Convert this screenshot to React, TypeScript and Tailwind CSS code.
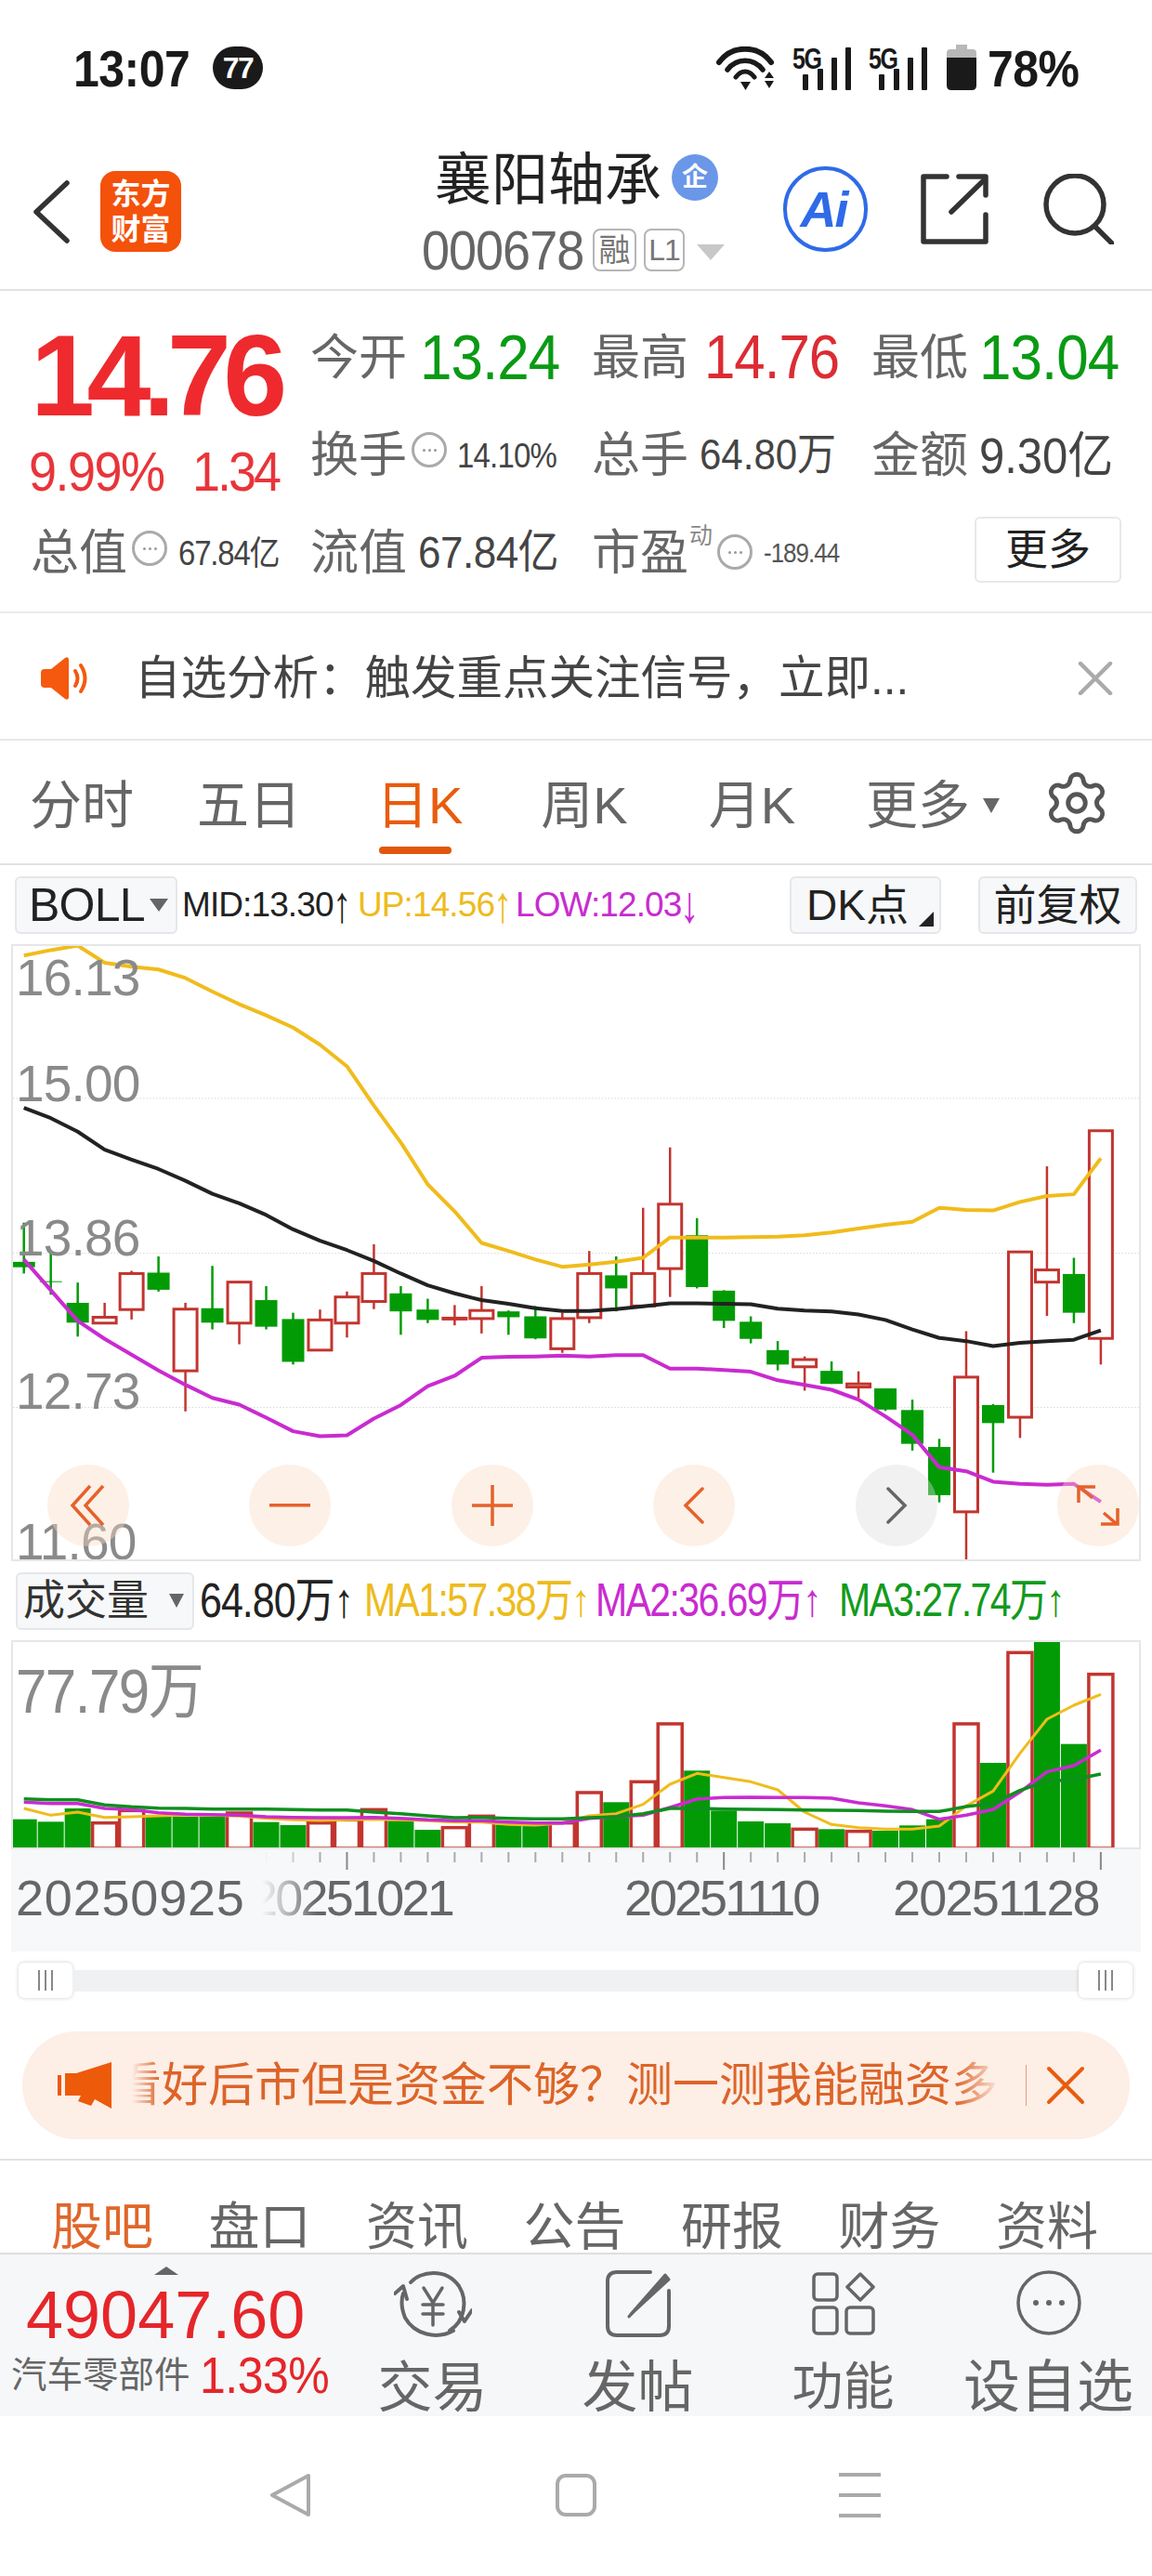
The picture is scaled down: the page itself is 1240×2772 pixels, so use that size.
import React from 'react';
import { Settings } from 'lucide-react';

const zy = (z: number) => 940 + z / 2.063;
const vy = (z: number) => 1690 + z / 3;
const cx = (i: number) => 25.7 + 28.98 * i;
const RED = '#c2352f';
const GREEN = '#029b06';

type Candle = [0 | 1, number, number, number, number];

// up, wick top, body top, body bottom, wick bottom (zoomed crop coords)
const candles: Candle[] = [
  [0, 775, 862, 874, 888], [0, 840, 905, 907, 935], [0, 908, 953, 997, 1028], [1, 953, 985, 998, 998],
  [1, 882, 888, 968, 990], [0, 850, 886, 924, 928], [1, 953, 967, 1104, 1194], [0, 871, 965, 997, 1012],
  [1, 905, 907, 998, 1045], [0, 916, 947, 1006, 1012], [0, 975, 989, 1084, 1090], [1, 968, 991, 1058, 1058],
  [1, 928, 940, 998, 1030], [1, 823, 888, 950, 967], [0, 916, 932, 972, 1024], [0, 944, 968, 991, 998],
  [1, 958, 987, 989, 1003], [1, 916, 970, 988, 1021], [0, 970, 972, 985, 1024], [0, 960, 983, 1032, 1034],
  [1, 975, 988, 1055, 1064], [1, 838, 888, 986, 998], [0, 850, 892, 921, 972], [1, 742, 888, 960, 962],
  [1, 608, 734, 877, 940], [0, 765, 803, 918, 921], [0, 925, 926, 993, 1009], [0, 983, 995, 1033, 1043],
  [0, 1038, 1058, 1090, 1103], [1, 1072, 1079, 1095, 1148], [0, 1083, 1104, 1133, 1133], [1, 1105, 1133, 1140, 1165],
  [0, 1143, 1143, 1190, 1193], [0, 1168, 1191, 1266, 1281], [0, 1255, 1273, 1380, 1396], [1, 1016, 1118, 1417, 1525],
  [0, 1178, 1180, 1220, 1330], [1, 840, 840, 1207, 1253], [1, 650, 880, 907, 982], [0, 853, 889, 975, 998],
  [1, 570, 571, 1032, 1090],
];

const upLine = [182, 170, 160, 198, 207, 213, 232, 262, 290, 315, 342, 380, 428, 515, 597, 690, 750, 820, 838, 857, 873, 868, 862, 853, 808, 808, 808, 807, 806, 803, 797, 788, 780, 773, 742, 747, 748, 729, 716, 712, 632];
const midLine = [520, 543, 573, 613, 635, 656, 682, 711, 732, 758, 790, 815, 836, 860, 888, 914, 932, 947, 955, 965, 971, 971, 967, 961, 954, 954, 955, 956, 966, 970, 972, 979, 991, 1012, 1031, 1038, 1049, 1042, 1038, 1035, 1014];
const lowLine = [857, 925, 993, 1033, 1068, 1103, 1135, 1164, 1179, 1208, 1238, 1249, 1247, 1210, 1180, 1138, 1115, 1075, 1073, 1072, 1070, 1072, 1069, 1069, 1099, 1099, 1102, 1106, 1125, 1135, 1146, 1168, 1205, 1246, 1318, 1327, 1350, 1355, 1357, 1355, 1395];

const volumes: [0 | 1, number][] = [
  [0, 803], [0, 811], [0, 768], [1, 815], [1, 775], [0, 795], [0, 795], [0, 795], [1, 783], [0, 812], [0, 822],
  [1, 815], [1, 805], [1, 772], [0, 808], [0, 837], [1, 830], [1, 793], [0, 820], [0, 820], [1, 815], [1, 717],
  [0, 748], [1, 682], [1, 495], [0, 646], [0, 775], [0, 810], [0, 816], [1, 835], [0, 835], [1, 842], [0, 840],
  [0, 823], [0, 803], [1, 495], [0, 621], [1, 265], [0, 224], [0, 560], [1, 335],
];
const ma1 = [768, 790, 780, 797, 795, 792, 790, 790, 793, 800, 805, 807, 805, 803, 805, 808, 812, 812, 820, 822, 815, 792, 785, 755, 690, 655, 668, 682, 708, 780, 820, 830, 835, 835, 825, 760, 712, 590, 480, 435, 400];
const ma2 = [748, 752, 752, 768, 772, 782, 787, 788, 790, 795, 797, 798, 798, 797, 800, 805, 808, 808, 812, 815, 815, 800, 795, 790, 765, 738, 733, 732, 733, 733, 735, 750, 760, 772, 803, 790, 772, 715, 650, 630, 580];
const ma3 = [737, 740, 740, 757, 763, 767, 768, 770, 770, 770, 772, 773, 773, 780, 785, 792, 798, 797, 800, 802, 802, 798, 795, 785, 768, 768, 770, 771, 772, 773, 774, 775, 777, 778, 778, 762, 752, 710, 680, 675, 657];

const pts = (arr: number[], f: (z: number) => number) => arr.map((z, i) => `${cx(i)},${f(z)}`).join(' ');

function DotCircle({ className }: { className?: string }) {
  return (
    <span className={`flex items-center justify-center gap-[3px] rounded-full border-[3px] border-[#aaaaaa] w-[38px] h-[38px] shrink-0 ${className ?? ''}`}>
      <i className="w-[3px] h-[3px] rounded-full bg-[#999999]" />
      <i className="w-[3px] h-[3px] rounded-full bg-[#999999]" />
      <i className="w-[3px] h-[3px] rounded-full bg-[#999999]" />
    </span>
  );
}

function Signal() {
  return (
    <div className="relative w-[62px] h-[47px]">
      <span className="absolute -left-[1px] -top-[2px] text-[25px] leading-none font-bold tracking-[-1.5px] text-[#1a1a1a] scale-y-125 origin-top">5G</span>
      <svg width="62" height="47" viewBox="0 0 62 47" className="block">
        <rect x="10" y="30" width="6" height="17" rx="1" fill="#1a1a1a" />
        <rect x="26" y="24" width="6" height="23" rx="1" fill="#1a1a1a" />
        <rect x="41" y="12" width="6" height="35" rx="1" fill="#1a1a1a" />
        <rect x="56" y="1" width="6" height="46" rx="1" fill="#1a1a1a" />
      </svg>
    </div>
  );
}

function StatusBar() {
  return (
    <div className="h-[144px] pt-[50px] flex items-start shrink-0">
      <span className="ml-[79px] mt-[2px] text-[50px] leading-[44px] font-bold text-[#1a1a1a] tracking-[-0.5px] w-[150px] scale-y-110">13:07</span>
      <span className="flex items-center justify-center w-[54px] h-[46px] rounded-full bg-[#1a1a1a] text-white text-[32px] font-bold tracking-[-1.5px]">77</span>
      <svg width="68" height="47" viewBox="0 0 68 47" className="ml-[488px] block" fill="none" stroke="#1a1a1a" strokeLinecap="round">
        <path d="M3 17 C17 -2 45 -2 59 17" strokeWidth="6" />
        <path d="M12 25 C22 12 40 12 50 25" strokeWidth="5.5" />
        <path d="M21 33 C27 25 35 25 41 33" strokeWidth="5" />
        <path d="M26 38 H37 L31.5 47 Z" fill="#1a1a1a" stroke="none" />
        <path d="M57 27 L62 34 H52 Z M52 37 H62 L57 45 Z" fill="#1a1a1a" stroke="none" />
      </svg>
      <div className="ml-[15px]"><Signal /></div>
      <div className="ml-[20px]"><Signal /></div>
      <svg width="32" height="49" viewBox="0 0 32 49" className="ml-[21px] -mt-[2px] block">
        <path d="M10 0 H22 V5 H28 Q32 5 32 9 V14 H0 V9 Q0 5 4 5 H10 Z" fill="#b8b8b8" />
        <path d="M0 14 H32 V44 Q32 49 27 49 H5 Q0 49 0 44 Z" fill="#1a1a1a" />
      </svg>
      <span className="ml-[12px] mt-[2px] text-[50px] leading-[44px] font-bold text-[#1a1a1a] tracking-[-0.5px] scale-y-110">78%</span>
    </div>
  );
}

function NavHeader() {
  return (
    <div className="h-[169px] shrink-0 flex items-center border-b-2 border-[#e2e2e2]">
      <svg width="39" height="68" viewBox="0 0 39 68" className="ml-[36px] block" fill="none" stroke="#333333" strokeWidth="5.5" strokeLinecap="round" strokeLinejoin="round">
        <path d="M36 3 L3 34 L36 65" />
      </svg>
      <div className="ml-[33px] w-[87px] h-[87px] rounded-[16px] bg-[#f4510b] text-white text-[32px] leading-[38px] font-bold flex flex-col items-center justify-center">
        <span>东方</span>
        <span>财富</span>
      </div>
      <div className="ml-[262px] w-[326px] flex flex-col items-start">
        <div className="flex items-center ml-[11px]">
          <span className="text-[61px] leading-[60px] text-[#222222]">襄阳轴承</span>
          <span className="ml-[11px] -mt-[6px] w-[50px] h-[50px] rounded-full bg-[#6b97e8] text-white text-[28px] font-bold flex items-center justify-center">企</span>
        </div>
        <div className="flex items-center mt-[22px]">
          <span className="text-[54px] leading-[44px] text-[#666666] w-[184px] tracking-[-1px] scale-y-110 origin-left -ml-[3px]">000678</span>
          <span className="w-[47px] h-[46px] border-2 border-[#b5b5b5] rounded-[8px] text-[#777777] text-[34px] leading-none flex items-center justify-center">融</span>
          <span className="ml-[8px] w-[44px] h-[46px] border-2 border-[#b5b5b5] rounded-[8px] text-[#777777] text-[32px] leading-none flex items-center justify-center tracking-[-1px]">L1</span>
          <span className="ml-[13px] mt-[6px] w-0 h-0 border-x-[15px] border-x-transparent border-t-[17px] border-t-[#c8c8c8]" />
        </div>
      </div>
      <div className="ml-[60px] -mt-[6px] w-[91px] h-[92px] rounded-full border-[4px] border-[#2f6be8] text-[#2f6be8] italic font-bold text-[54px] tracking-[-2px] leading-none flex items-center justify-center pr-[4px]">Ai</div>
      <svg width="73" height="76" viewBox="0 0 73 76" className="ml-[57px] -mt-[6px] block" fill="none" stroke="#333333" strokeWidth="5.5" strokeLinecap="round" strokeLinejoin="round">
        <path d="M28 3 H3 V73 H70 V44" />
        <path d="M33 41 L69 6" />
        <path d="M41 3 H70 V23" />
      </svg>
      <svg width="76" height="76" viewBox="0 0 76 76" className="ml-[59px] -mt-[6px] block" fill="none" stroke="#333333" strokeWidth="5.5" strokeLinecap="round">
        <circle cx="34" cy="33" r="31" />
        <path d="M56 57 L74 75" />
      </svg>
    </div>
  );
}

function Stat({ label, value, color, valueClass }: { label: string; value: string; color: string; valueClass: string }) {
  return (
    <div className="flex items-center h-[50px]">
      <span className="text-[52px] leading-none text-[#666666] w-[104px] shrink-0 whitespace-nowrap">{label}</span>
      <span className={`${valueClass} leading-none whitespace-nowrap scale-y-110`} style={{ color }}>{value}</span>
    </div>
  );
}

function StatsBlock() {
  return (
    <div className="h-[347px] shrink-0 pl-[33px] pt-[47px] border-b-2 border-[#ececec]">
      <div className="grid grid-cols-[301px_303px_301px_269px] grid-rows-[50px_50px_50px] gap-y-[55px]">
        <div className="row-span-2 flex flex-col">
          <span className="-mt-[11px] text-[124px] leading-[110px] font-bold tracking-[-8.5px] text-[#ee2a2e]">14.76</span>
          <div className="mt-[28px] -ml-[2px] flex items-center text-[54px] leading-[40px] tracking-[-1.5px] text-[#e8353a]">
            <span className="w-[176px] scale-y-110 origin-left">9.99%</span>
            <span className="scale-y-110 tracking-[-3px]">1.34</span>
          </div>
        </div>
        <Stat label="今开" value="13.24" color="#0a9a14" valueClass="ml-[14px] text-[62px] tracking-[-1px]" />
        <Stat label="最高" value="14.76" color="#dc2c33" valueClass="ml-[17px] text-[60px] tracking-[-1px]" />
        <Stat label="最低" value="13.04" color="#0a9a14" valueClass="ml-[12px] text-[62px] tracking-[-1px]" />

        <div className="flex items-center">
          <span className="text-[52px] leading-none text-[#666666] w-[104px] shrink-0">换手</span>
          <DotCircle className="-mt-[12px] ml-[5px]" />
          <span className="ml-[11px] text-[33px] leading-none text-[#444444] tracking-[-0.8px] scale-y-110">14.10%</span>
        </div>
        <Stat label="总手" value="64.80万" color="#444444" valueClass="ml-[12px] text-[42px]" />
        <Stat label="金额" value="9.30亿" color="#444444" valueClass="ml-[12px] text-[49px]" />

        <div className="flex items-center">
          <span className="text-[52px] leading-none text-[#666666] w-[104px] shrink-0">总值</span>
          <DotCircle className="-mt-[10px] ml-[5px]" />
          <span className="ml-[12px] text-[33px] leading-none text-[#444444] tracking-[-1.2px] scale-y-110">67.84亿</span>
        </div>
        <Stat label="流值" value="67.84亿" color="#444444" valueClass="ml-[12px] text-[44px] tracking-[-0.5px]" />
        <div className="flex items-center">
          <span className="text-[52px] leading-none text-[#666666] w-[104px] shrink-0">市盈</span>
          <span className="-mt-[38px] ml-[1px] w-[30px] text-[25px] leading-none text-[#888888]">动</span>
          <DotCircle className="-mt-[2px]" />
          <span className="ml-[12px] text-[26px] leading-none text-[#555555] tracking-[-1px] scale-y-110">-189.44</span>
        </div>
        <div className="flex justify-end items-center">
          <div className="-mt-[8px] w-[158px] h-[71px] shrink-0 border-2 border-[#e8e8e8] rounded-[6px] flex items-center justify-center text-[46px] text-[#222222]">更多</div>
        </div>
      </div>
    </div>
  );
}

function NoticeRow() {
  return (
    <div className="h-[137px] shrink-0 pt-[4px] flex items-center border-b-2 border-[#e8e8e8]">
      <svg width="58" height="46" viewBox="0 0 58 46" className="ml-[44px] block">
        <path d="M4 13 H11 L26 1 Q30 -1 30 3 V43 Q30 47 26 45 L11 33 H4 Q0 33 0 29 V17 Q0 13 4 13 Z" fill="#f4590f" />
        <path d="M37 15 Q42 23 37 31 M43 9 Q52 23 43 37" stroke="#f4590f" strokeWidth="4" fill="none" strokeLinecap="round" />
      </svg>
      <span className="ml-[43px] text-[49.5px] leading-none text-[#444444] w-[852px] whitespace-nowrap">自选分析：触发重点关注信号，立即...</span>
      <svg width="38" height="36" viewBox="0 0 38 36" className="ml-[163px] block" stroke="#aaaaaa" strokeWidth="4.5" strokeLinecap="round">
        <path d="M3 2 L35 34 M35 2 L3 34" />
      </svg>
    </div>
  );
}

function PeriodTabs() {
  return (
    <div className="h-[134px] shrink-0 pt-[8px] flex items-center text-[56px] leading-none text-[#666666] border-b-2 border-[#e2e2e2]">
      <span className="ml-[32px]">分时</span>
      <span className="ml-[68px]">五日</span>
      <div className="relative ml-[81px] text-[#e85c0d]">
        <span>日K</span>
        <i className="absolute left-[3px] -bottom-[24px] w-[78px] h-[8px] rounded-[4px] bg-[#e2560c]" />
      </div>
      <span className="ml-[84px]">周K</span>
      <span className="ml-[87px]">月K</span>
      <span className="ml-[76px]">更多</span>
      <span className="ml-[14px] w-0 h-0 border-x-[9px] border-x-transparent border-t-[16px] border-t-[#666666]" />
      <Settings size={74} strokeWidth={1.6} color="#555555" className="ml-[46px] -mt-[6px]" />
    </div>
  );
}

function Arrow({ children }: { children: string }) {
  return <span className="inline-block scale-y-[1.5] scale-x-110">{children}</span>;
}

function IndicatorRow() {
  return (
    <div className="h-[85px] shrink-0 flex items-center">
      <div className="ml-[16px] w-[175px] h-[62px] rounded-[6px] border-2 border-[#e6e6ea] bg-[#f7f8fa] flex items-center pl-[13px]">
        <span className="text-[50px] leading-none text-[#222222] tracking-[-0.8px]">BOLL</span>
        <span className="ml-[5px] w-0 h-0 border-x-[10px] border-x-transparent border-t-[14px] border-t-[#666666]" />
      </div>
      <div className="ml-[5px] flex items-center text-[37px] leading-none tracking-[-0.9px] whitespace-nowrap">
        <span className="text-[#222222] w-[189px]">MID:13.30<Arrow>↑</Arrow></span>
        <span className="text-[#eebb1c] w-[170px]">UP:14.56<Arrow>↑</Arrow></span>
        <span className="text-[#c92bd0]">LOW:12.03<Arrow>↓</Arrow></span>
      </div>
      <div className="ml-auto w-[163px] h-[62px] rounded-[6px] border-2 border-[#e6e6ea] bg-[#f7f8fa] relative flex items-center pl-[16px] text-[46px] leading-none text-[#222222] whitespace-nowrap">
        DK点
        <i className="absolute right-[6px] bottom-[6px] w-0 h-0 border-l-[16px] border-l-transparent border-b-[16px] border-b-[#222222]" />
      </div>
      <div className="ml-[40px] mr-[16px] w-[171px] h-[62px] rounded-[6px] border-2 border-[#e6e6ea] bg-[#f7f8fa] flex items-center justify-center text-[46px] leading-none text-[#222222]">前复权</div>
    </div>
  );
}

function CircleBtn({ grey, children }: { grey?: boolean; children: React.ReactNode }) {
  return (
    <div className={`w-[88px] h-[88px] rounded-full flex items-center justify-center ${grey ? 'bg-[#dddddd]/40' : 'bg-[#fbd9c4]/40'}`}>
      {children}
    </div>
  );
}

function PriceChart() {
  const labels: [string, string][] = [
    ['16.13', 'top-[15px]'], ['15.00', 'top-[129px]'], ['13.86', 'top-[295px]'], ['12.73', 'top-[460px]'], ['11.60', 'top-[622px]'],
  ];
  return (
    <div className="relative mx-[12px] w-[1216px] h-[664px] shrink-0 border-2 border-[#e6e6e6] overflow-hidden">
      <svg width="1212" height="660" viewBox="14 1018 1212 660" className="block">
        {[zy(499), zy(843), zy(1185)].map((y) => (
          <line key={y} x1="14" x2="1226" y1={y} y2={y} stroke="#d8d8d8" strokeWidth="1" strokeDasharray="1.5 2" />
        ))}
        {candles.map(([up, wt, bt, bb, wb], i) => {
          const color = up ? RED : GREEN;
          const x = cx(i);
          return (
            <g key={i}>
              <line x1={x} x2={x} y1={zy(wt)} y2={zy(wb)} stroke={color} strokeWidth="2.5" />
              {up ? (
                <rect x={x - 12.5} y={zy(bt)} width="25" height={zy(bb) - zy(bt)} fill="white" stroke={color} strokeWidth="3" />
              ) : (
                <rect x={x - 12} y={zy(bt)} width="24" height={zy(bb) - zy(bt)} fill={color} />
              )}
            </g>
          );
        })}
        <polyline points={pts(upLine, zy)} fill="none" stroke="#f0bc1c" strokeWidth="4" strokeLinejoin="round" />
        <polyline points={pts(midLine, zy)} fill="none" stroke="#222222" strokeWidth="4" strokeLinejoin="round" />
        <polyline points={pts(lowLine, zy)} fill="none" stroke="#c92bd0" strokeWidth="4" strokeLinejoin="round" />
      </svg>
      {labels.map(([text, pos]) => (
        <span key={text} className={`absolute left-[3px] ${pos} text-[55px] leading-[38px] text-[#8a8a8a] tracking-[-0.8px]`}>{text}</span>
      ))}
      <div className="absolute left-[37px] right-[0px] top-[558px] flex justify-between">
        <CircleBtn>
          <svg width="40" height="46" viewBox="0 0 40 46" fill="none" stroke="#e5622a" strokeWidth="3.5"><path d="M22 2 L3 23 L22 44 M36 2 L17 23 L36 44" /></svg>
        </CircleBtn>
        <CircleBtn>
          <svg width="44" height="4" viewBox="0 0 44 4"><rect width="44" height="3.5" fill="#e5622a" /></svg>
        </CircleBtn>
        <CircleBtn>
          <svg width="44" height="44" viewBox="0 0 44 44" fill="none" stroke="#e5622a" strokeWidth="3.5"><path d="M0 22 H44 M22 0 V44" /></svg>
        </CircleBtn>
        <CircleBtn>
          <svg width="24" height="40" viewBox="0 0 24 40" fill="none" stroke="#e5622a" strokeWidth="3.5" strokeLinecap="round"><path d="M21 2 L3 20 L21 38" /></svg>
        </CircleBtn>
        <CircleBtn grey>
          <svg width="24" height="40" viewBox="0 0 24 40" fill="none" stroke="#666666" strokeWidth="3.5" strokeLinecap="round"><path d="M3 2 L21 20 L3 38" /></svg>
        </CircleBtn>
        <CircleBtn>
          <svg width="46" height="46" viewBox="0 0 46 46" fill="none" stroke="#e5622a" strokeWidth="3.5"><path d="M2 20 V3 H20 M3 3 L17 15 M44 26 V43 H26 M43 43 L29 31" /></svg>
        </CircleBtn>
      </div>
    </div>
  );
}

function VolumeRow() {
  return (
    <div className="h-[85px] shrink-0 flex items-center whitespace-nowrap">
      <div className="ml-[17px] w-[192px] h-[62px] rounded-[6px] border-2 border-[#e6e6ea] bg-[#f7f8fa] flex items-center pl-[6px] text-[45px] leading-none text-[#333333]">
        成交量
        <span className="ml-[22px] w-0 h-0 border-x-[8px] border-x-transparent border-t-[15px] border-t-[#666666]" />
      </div>
      <div className="flex items-center ml-[6px] text-[41px] leading-none tracking-[-1.6px] scale-y-[1.2]">
        <span className="text-[#222222] w-[177px] text-[43px] tracking-[-1px]">64.80万↑</span>
        <span className="text-[#eebb1c] w-[249px]">MA1:57.38万↑</span>
        <span className="text-[#c92bd0] w-[262px]">MA2:36.69万↑</span>
        <span className="text-[#129a1c]">MA3:27.74万↑</span>
      </div>
    </div>
  );
}

function VolumeChart() {
  return (
    <div className="relative mx-[12px] w-[1216px] h-[225px] shrink-0 border-2 border-[#e6e6e6] overflow-hidden">
      <svg width="1212" height="221" viewBox="14 1767 1212 221" className="block">
        {volumes.map(([up, top], i) => {
          const x = cx(i);
          return up ? (
            <rect key={i} x={x - 13} y={vy(top)} width="26" height={1989 - vy(top)} fill="white" stroke={RED} strokeWidth="3.5" />
          ) : (
            <rect key={i} x={x - 14} y={vy(top)} width="28" height={1990 - vy(top)} fill={GREEN} />
          );
        })}
        <polyline points={pts(ma1, vy)} fill="none" stroke="#f0bc1c" strokeWidth="3" strokeLinejoin="round" />
        <polyline points={pts(ma2, vy)} fill="none" stroke="#c92bd0" strokeWidth="3.5" strokeLinejoin="round" />
        <polyline points={pts(ma3, vy)} fill="none" stroke="#0f8f1e" strokeWidth="3.5" strokeLinejoin="round" />
      </svg>
      <span className="absolute left-[3px] top-[24px] text-[60px] leading-[60px] text-[#8a8a8a] tracking-[-1.5px] scale-y-110 origin-left">77.79万</span>
    </div>
  );
}

function DateAxis() {
  const dates: [string, string][] = [
    ['20250925', 'left-[5px] tracking-[0.8px]'],
    ['20251021', 'left-[257px] tracking-[-2.8px]'],
    ['20251110', 'left-[660px] tracking-[-3px]'],
    ['20251128', 'left-[949px] tracking-[-1.8px]'],
  ];
  return (
    <div className="relative mx-[12px] w-[1216px] h-[110px] shrink-0 bg-[#f7f8fa] overflow-hidden">
      <svg width="1216" height="26" viewBox="12 1990 1216 26" className="block">
        {candles.map((_, i) => {
          if (i < 9) return null;
          const major = i === 12 || i === 26 || i === 40;
          return <line key={i} x1={cx(i)} x2={cx(i)} y1="1993" y2={major ? 2012 : 2004} stroke={major ? '#888888' : '#aaaaaa'} strokeWidth="2" />;
        })}
      </svg>
      {dates.map(([d, pos]) => (
        <span key={d} className={`absolute ${pos} top-[27px] text-[54px] leading-[50px] text-[#666666]`}>{d}</span>
      ))}
      <i className="absolute left-[255px] top-0 bottom-0 w-[75px] bg-gradient-to-r from-[#f7f8fa] from-20% to-transparent" />
    </div>
  );
}

function Handle() {
  return (
    <div className="w-[58px] h-[38px] bg-white rounded-[6px] shadow-[0_0_4px_rgba(0,0,0,0.2)] flex items-center justify-center gap-[5px] shrink-0">
      <i className="w-[2px] h-[22px] bg-[#888888]" />
      <i className="w-[2px] h-[22px] bg-[#888888]" />
      <i className="w-[2px] h-[22px] bg-[#888888]" />
    </div>
  );
}

function RangeSlider() {
  return (
    <div className="h-[48px] shrink-0 pt-[12px] pl-[20px] pr-[21px] flex items-start">
      <Handle />
      <div className="flex-1 h-[23px] mt-[8px] bg-[#f0f1f3]" />
      <Handle />
    </div>
  );
}

function PromoBanner() {
  return (
    <div className="h-[177px] shrink-0 pt-[38px] border-b-2 border-[#e2e2e2]">
      <div className="mx-[24px] h-[116px] rounded-full bg-[#fdeee6] flex items-center">
        <svg width="58" height="50" viewBox="0 0 58 50" className="ml-[38px] shrink-0 block">
          <path d="M0 14 H4 V36 H0 Z" fill="#ec5a0a" />
          <path d="M8 12 H20 L58 0 V50 L40 40 L36 47 L22 42 L25 36 H8 Z" fill="#ec5a0a" />
        </svg>
        <div className="relative ml-[22px] w-[936px] h-[60px] overflow-hidden shrink-0">
          <span className="absolute left-[-18px] top-[5px] text-[50px] leading-none text-[#dc6428] whitespace-nowrap">看好后市但是资金不够？测一测我能融资多少</span>
          <i className="absolute left-0 top-0 bottom-0 w-[30px] bg-gradient-to-r from-[#fdeee6] to-transparent" />
          <i className="absolute right-0 top-0 bottom-0 w-[50px] bg-gradient-to-l from-[#fdeee6] to-transparent" />
        </div>
        <i className="ml-[26px] w-[1px] h-[44px] bg-[#e0a080] shrink-0" />
        <svg width="42" height="42" viewBox="0 0 42 42" className="ml-[21px] shrink-0 block" stroke="#e85c0d" strokeWidth="4" strokeLinecap="round">
          <path d="M3 3 L39 39 M39 3 L3 39" />
        </svg>
      </div>
    </div>
  );
}

function InfoTabs() {
  const tabs = ['股吧', '盘口', '资讯', '公告', '研报', '财务', '资料'];
  return (
    <div className="h-[101px] shrink-0 pl-[55px] pr-[58px] flex items-end justify-between text-[55px] leading-none text-[#666666] border-b-2 border-[#dedede]">
      {tabs.map((t, i) => (
        <span key={t} className={i === 0 ? 'text-[#e0662a]' : ''}>{t}</span>
      ))}
    </div>
  );
}

function BottomBar() {
  const stroke = { fill: 'none', stroke: '#666666', strokeWidth: 3, strokeLinecap: 'round' as const, strokeLinejoin: 'round' as const };
  const actions: [string, string, React.ReactNode][] = [
    ['交易', 'text-[59px]', (
      <svg width="84" height="74" viewBox="0 0 84 74" {...stroke}>
        <path d="M18 14 C28 2 56 -2 70 18 C80 34 76 56 60 66" strokeWidth="4" />
        <path d="M64 66 C46 76 22 70 12 52 C8 42 8 32 10 26" strokeWidth="4" />
        <path d="M1 26 L10 18 L14 32" strokeWidth="4" />
        <path d="M84 44 L76 56 L70 46" strokeWidth="4" />
        <path d="M32 20 L42 36 L52 20 M31 38 H53 M31 48 H53 M42 36 V60" strokeWidth="3.5" />
      </svg>
    )],
    ['发帖', 'text-[60px]', (
      <svg width="70" height="72" viewBox="0 0 70 72" {...stroke}>
        <path d="M48 2 H12 Q2 2 2 12 V60 Q2 70 12 70 H58 Q68 70 68 60 V22" strokeWidth="4" />
        <path d="M64 5 L28 46 L25 50 L31 44 L68 10 Z" fill="#666666" />
      </svg>
    )],
    ['功能', 'text-[55px]', (
      <svg width="68" height="68" viewBox="0 0 68 68" {...stroke}>
        <rect x="2" y="2" width="25" height="28" rx="4" strokeWidth="3.5" />
        <rect x="2" y="38" width="25" height="28" rx="4" strokeWidth="3.5" />
        <rect x="37" y="38" width="29" height="28" rx="4" strokeWidth="3.5" />
        <path d="M52 2 L66 16 L52 30 L38 16 Z" strokeWidth="3.5" />
      </svg>
    )],
    ['设自选', 'text-[61px]', (
      <svg width="72" height="72" viewBox="0 0 72 72" {...stroke}>
        <circle cx="36" cy="36" r="33" strokeWidth="3.5" />
        <circle cx="22" cy="36" r="3" fill="#666666" stroke="none" />
        <circle cx="36" cy="36" r="3" fill="#666666" stroke="none" />
        <circle cx="50" cy="36" r="3" fill="#666666" stroke="none" />
      </svg>
    )],
  ];
  return (
    <div className="h-[174px] shrink-0 bg-[#f6f7f9] flex whitespace-nowrap">
      <div className="w-[355px] shrink-0 flex flex-col items-start">
        <span className="ml-[166px] mt-[13px] w-0 h-0 border-x-[13px] border-x-transparent border-b-[9px] border-b-[#666666]" />
        <span className="ml-[28px] mt-[14px] text-[72px] leading-[58px] text-[#e5262a]">49047.60</span>
        <div className="ml-[12px] mt-[11px] flex items-center">
          <span className="text-[38.5px] leading-none text-[#666666] w-[203px]">汽车零部件</span>
          <span className="text-[50px] leading-none text-[#e5262a] tracking-[-0.5px] scale-y-110">1.33%</span>
        </div>
      </div>
      {actions.map(([label, size, icon]) => (
        <div key={label} className="w-[221px] shrink-0 flex flex-col items-center pt-[16px]">
          <div className="h-[74px] flex items-center">{icon}</div>
          <span className={`mt-[25px] ${size} leading-none text-[#666666]`}>{label}</span>
        </div>
      ))}
    </div>
  );
}

function SystemNav() {
  return (
    <div className="flex-1 flex items-center -mt-[2px]">
      <svg width="44" height="46" viewBox="0 0 44 46" className="ml-[291px] block" fill="none" stroke="#aaaaaa" strokeWidth="4" strokeLinejoin="round">
        <path d="M41 2 V44 L2 23 Z" />
      </svg>
      <svg width="44" height="46" viewBox="0 0 44 46" className="ml-[263px] block" fill="none" stroke="#aaaaaa" strokeWidth="4">
        <rect x="2" y="2" width="40" height="42" rx="9" />
      </svg>
      <div className="ml-[261px] w-[45px] h-[48px] flex flex-col justify-between">
        <i className="h-[4px] bg-[#aaaaaa]" />
        <i className="h-[4px] bg-[#aaaaaa]" />
        <i className="h-[4px] bg-[#aaaaaa]" />
      </div>
    </div>
  );
}

export default function App() {
  return (
    <div className="w-[1240px] h-[2772px] bg-white overflow-hidden flex flex-col font-['Liberation_Sans','Noto_Sans_CJK_SC',sans-serif]">
      <StatusBar />
      <NavHeader />
      <StatsBlock />
      <NoticeRow />
      <PeriodTabs />
      <IndicatorRow />
      <PriceChart />
      <VolumeRow />
      <VolumeChart />
      <DateAxis />
      <RangeSlider />
      <PromoBanner />
      <InfoTabs />
      <BottomBar />
      <SystemNav />
    </div>
  );
}
